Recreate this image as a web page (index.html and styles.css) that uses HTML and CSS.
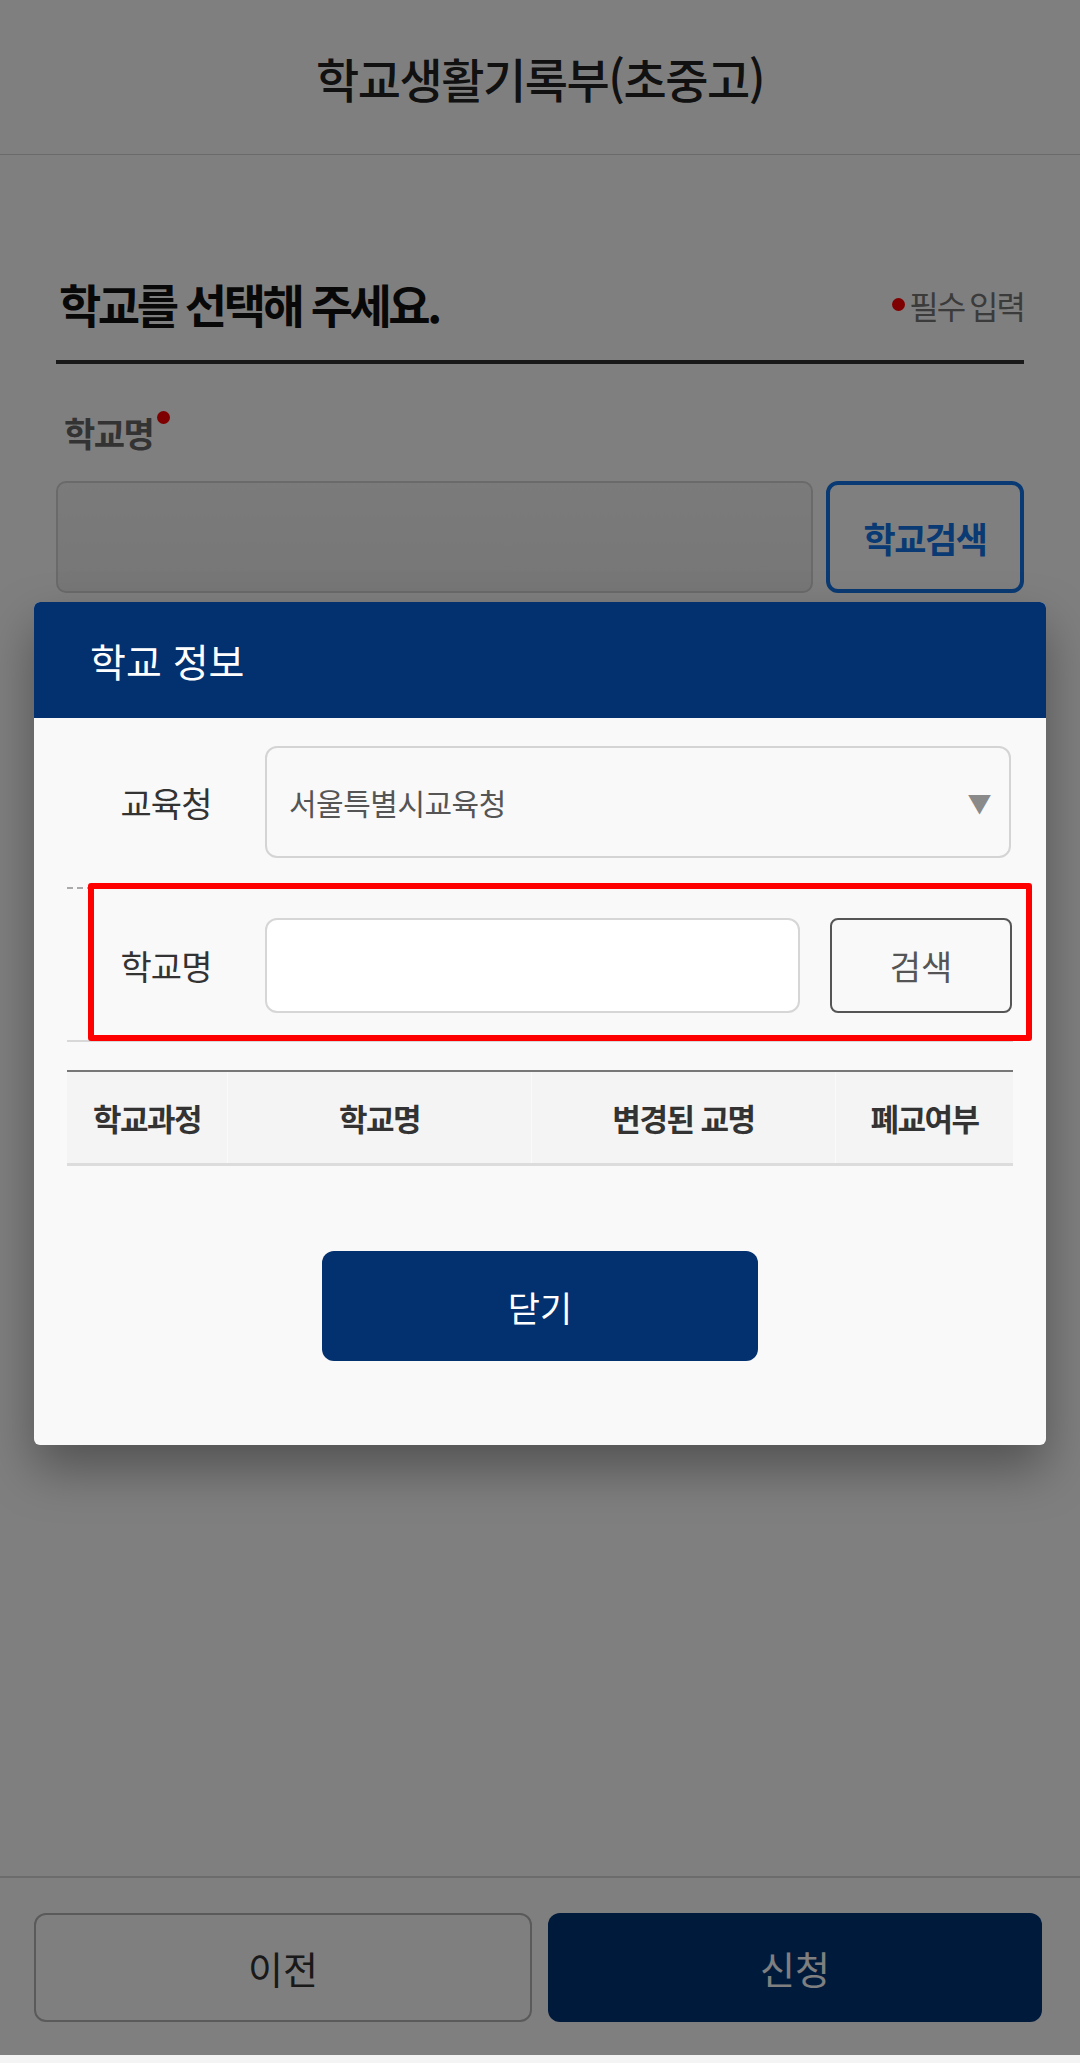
FILE: index.html
```html
<!DOCTYPE html>
<html lang="ko">
<head>
    <meta charset="utf-8">
    <title>학교생활기록부(초중고)</title>
    <link rel="stylesheet" href="styles.css">
</head>
<body>
    <div class="page">
        <header class="top-bar">
            <h1>학교생활기록부(초중고)</h1>
        </header>

        <main class="content">
            <div class="section-head">
                <h2>학교를 선택해 주세요.</h2>
                <span class="required-note"><i class="dot"></i>필수 입력</span>
            </div>

            <label class="field-label">학교명<i class="dot sup"></i></label>
            <div class="field-row">
                <input class="field-input" type="text" disabled>
                <button class="outline-button">학교검색</button>
            </div>
        </main>

        <footer class="bottom-bar">
            <button class="btn-prev">이전</button>
            <button class="btn-apply">신청</button>
        </footer>

        <!-- 학교 검색 팝업 -->
        <div class="dim">
            <div class="modal">
                <div class="modal-head">학교 정보</div>
                <div class="modal-body">
                    <div class="form-row">
                        <span class="form-label">교육청</span>
                        <div class="select-box">
                            <span>서울특별시교육청</span>
                            <span class="arrow">▼</span>
                        </div>
                    </div>
                    <div class="form-row search-row">
                        <span class="form-label">학교명</span>
                        <input class="school-input" type="text">
                        <button class="search-button">검색</button>
                        <div class="highlight"></div>
                    </div>

                    <div class="result-table">
                        <div class="col c1">학교과정</div>
                        <div class="col c2">학교명</div>
                        <div class="col c3">변경된 교명</div>
                        <div class="col c4">폐교여부</div>
                    </div>

                    <div class="modal-actions">
                        <button class="close-button">닫기</button>
                    </div>
                </div>
            </div>
        </div>
    </div>
</body>
</html>
```

FILE: styles.css
```css
body {
    margin: 0;
    padding: 0;
    background: #f4f4f4;
    font-family: "Noto Sans CJK KR", "Noto Sans", sans-serif;
    color: #222;
}

button, input {
    font-family: inherit;
}

.page {
    position: relative;
    height: 2055px;
    background: white;
    display: flex;
    flex-direction: column;
    overflow: hidden;
}

.top-bar {
    height: 154px;
    border-bottom: 1px solid #d4d4d4;
    display: flex;
    justify-content: center;
    align-items: center;
}

.top-bar h1 {
    margin: 0;
    font-size: 47px;
    font-weight: 500;
    letter-spacing: -1.5px;
    color: #222;
}

.content {
    flex: 1;
    padding: 0 56px;
}

.section-head {
    display: flex;
    justify-content: space-between;
    align-items: center;
    height: 87px;
    padding-bottom: 14px;
    margin-top: 104px;
    border-bottom: 4px solid #333;
}

.section-head h2 {
    margin: 0 0 0 3px;
    font-size: 46px;
    font-weight: 700;
    letter-spacing: -3.5px;
    color: #111;
}

.required-note {
    display: flex;
    align-items: center;
    font-size: 32px;
    color: #777;
    letter-spacing: -2px;
    word-spacing: -2px;
    padding-top: 4px;
}

.dot {
    display: inline-block;
    width: 13px;
    height: 13px;
    border-radius: 50%;
    background: #ff0000;
    margin-right: 4px;
}

.dot.sup {
    margin-left: 4px;
    vertical-align: top;
    margin-top: 0;
}

.field-label {
    display: block;
    margin: 47px 0 0 8px;
    font-size: 34px;
    font-weight: 700;
    color: #666;
    letter-spacing: -1.5px;
    line-height: 44px;
}

.field-row {
    display: flex;
    gap: 13px;
    margin-top: 26px;
}

.field-input {
    flex: 1;
    height: 112px;
    box-sizing: border-box;
    border: 2px solid #d4d4d4;
    border-radius: 10px;
    background: linear-gradient(#f6f6f6, #eeeeee);
}

.outline-button {
    width: 198px;
    height: 112px;
    border: 4px solid #1474e6;
    border-radius: 12px;
    background: white;
    color: #1474e6;
    font-size: 35px;
    font-weight: 700;
    letter-spacing: -1.5px;
}

.bottom-bar {
    border-top: 2px solid #d8d8d8;
    display: flex;
    gap: 16px;
    padding: 35px 38px 33px 34px;
}

.bottom-bar button {
    flex: 1;
    height: 109px;
    border-radius: 12px;
    font-size: 38px;
}

.btn-prev {
    background: white;
    border: 2px solid #b4b4b4;
    color: #333;
}

.btn-apply {
    background: #003478;
    border: none;
    color: white;
}

/* 팝업 */
.dim {
    position: absolute;
    inset: 0;
    background: rgba(0, 0, 0, 0.5);
    display: flex;
    justify-content: center;
    align-items: center;
    padding-bottom: 8px;
    box-sizing: border-box;
}

.modal {
    width: 1012px;
    background: #f9f9f9;
    border-radius: 6px;
    box-shadow: 0 24px 50px rgba(0, 0, 0, 0.35);
}

.modal-head {
    height: 116px;
    display: flex;
    align-items: center;
    padding-left: 56px;
    background: #03306f;
    color: white;
    font-size: 39px;
    border-radius: 6px 6px 0 0;
}

.modal-body {
    padding: 0 33px 84px;
}

.form-row {
    display: flex;
    align-items: center;
    padding: 28px 2px 29px 0;
}

.form-label {
    width: 198px;
    text-align: center;
    font-size: 34px;
    color: #333;
    letter-spacing: -1px;
    flex-shrink: 0;
}

.select-box {
    flex: 1;
    height: 112px;
    box-sizing: border-box;
    border: 2px solid #d4d4d4;
    border-radius: 12px;
    display: flex;
    justify-content: space-between;
    align-items: center;
    padding: 0 18px 0 22px;
    font-size: 30px;
    color: #555;
    letter-spacing: -0.5px;
}

.arrow {
    color: #8a8a8a;
    font-size: 24px;
}

.search-row {
    position: relative;
    border-top: 2px dashed #aaa;
    border-bottom: 2px solid #d8d8d8;
    padding: 29px 1px 27px 0;
    gap: 30px;
}

.search-row .form-label {
    margin-right: -30px;
}

.school-input {
    width: 535px;
    height: 95px;
    box-sizing: border-box;
    border: 2px solid #d6d6d6;
    border-radius: 12px;
    background: white;
}

.search-button {
    flex: 1;
    height: 95px;
    border: 2px solid #555;
    border-radius: 8px;
    background: #f9f9f9;
    color: #555;
    font-size: 34px;
}

.highlight {
    position: absolute;
    top: -6px;
    left: 21px;
    right: -19px;
    bottom: -1px;
    border: 6px solid #ff0000;
    border-radius: 3px;
}

.result-table {
    display: flex;
    margin-top: 28px;
    border-top: 2px solid #777;
    border-bottom: 3px solid #dcdcdc;
    background: #f4f4f4;
    height: 91px;
}

.col {
    display: flex;
    justify-content: center;
    align-items: center;
    font-size: 31px;
    font-weight: 700;
    color: #333;
    letter-spacing: -1.5px;
}

.c1 { width: 160px; }
.c2 { width: 303px; border-left: 1px solid #fafafa; }
.c3 { width: 303px; border-left: 1px solid #fafafa; }
.c4 { flex: 1; border-left: 1px solid #fafafa; }

.modal-actions {
    display: flex;
    justify-content: center;
    margin-top: 85px;
}

.close-button {
    width: 436px;
    height: 110px;
    border: none;
    border-radius: 12px;
    background: #03306f;
    color: white;
    font-size: 35px;
}
```
